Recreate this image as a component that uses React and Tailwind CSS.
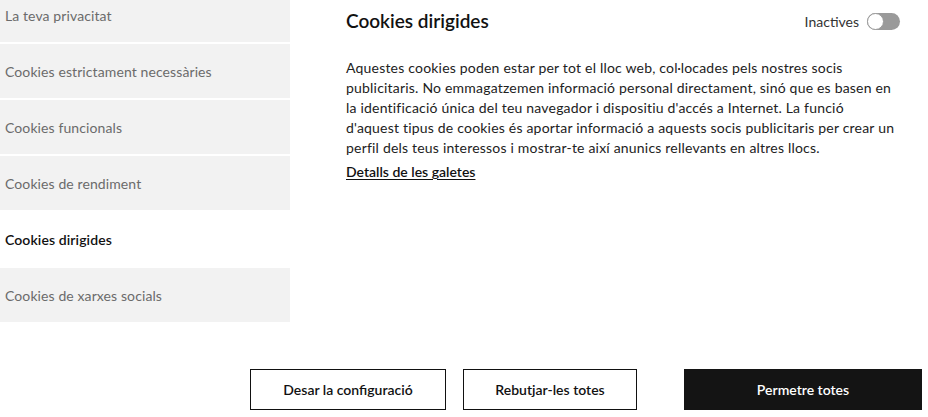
import React, { useState } from 'react';

const categories = [
  'La teva privacitat',
  'Cookies estrictament necessàries',
  'Cookies funcionals',
  'Cookies de rendiment',
  'Cookies dirigides',
  'Cookies de xarxes socials',
];

const lines = [
  'Aquestes cookies poden estar per tot el lloc web, col·locades pels nostres socis',
  'publicitaris. No emmagatzemen informació personal directament, sinó que es basen en',
  "la identificació única del teu navegador i dispositiu d'accés a Internet. La funció",
  "d'aquest tipus de cookies és aportar informació a aquests socis publicitaris per crear un",
  'perfil dels teus interessos i mostrar-te així anunics rellevants en altres llocs.',
];

const App = () => {
  const [active, setActive] = useState('Cookies dirigides');
  const [enabled, setEnabled] = useState(false);

  return (
    <div className="w-[928px] h-[417px] overflow-hidden bg-white text-[#1a1a1a] flex flex-col" style={{ fontFamily: 'Lato, "Noto Sans", sans-serif' }}>
      <div className="flex h-[350px]">
        {/* side menu */}
        <div className="w-[290px] shrink-0 -mt-[12px] flex flex-col">
          {categories.map((cat) => (
            <button
              key={cat}
              onClick={() => setActive(cat)}
              className={
                cat === active
                  ? 'h-[54px] mb-[2px] px-[5px] text-left text-[14px] tracking-[0.1px] font-semibold text-[#111] bg-white'
                  : 'h-[54px] mb-[2px] px-[5px] text-left text-[14px] tracking-[0.1px] text-[#6b6b6b] bg-[#f2f2f2]'
              }
            >
              {cat}
            </button>
          ))}
        </div>

        {/* detail */}
        <div className="ml-[56px] w-[555px] pt-[8px]">
          <div className="flex items-center justify-between h-[26px]">
            <h2 className="text-[19px] font-semibold text-[#111]">Cookies dirigides</h2>
            <div className="flex items-center gap-[8px]">
              <span className="text-[14px] text-[#333]">Inactives</span>
              <button
                onClick={() => setEnabled(!enabled)}
                className={
                  enabled
                    ? 'relative w-[33px] h-[17px] rounded-full bg-[#111] mr-[1px]'
                    : 'relative w-[33px] h-[17px] rounded-full bg-[#9a9a9a] mr-[1px]'
                }
              >
                <span
                  className={
                    enabled
                      ? 'absolute top-0 left-[16px] w-[17px] h-[17px] rounded-full bg-white border border-[#9a9a9a]'
                      : 'absolute top-0 left-0 w-[17px] h-[17px] rounded-full bg-white border border-[#9a9a9a]'
                  }
                />
              </button>
            </div>
          </div>

          <p className="mt-[24px] text-[14px] leading-[20px] tracking-[0.2px] text-[#222] whitespace-nowrap">
            {lines.map((l, i) => (
              <span key={i} className="block">{l}</span>
            ))}
          </p>
          <a href="#" className="inline-block mt-[3px] text-[14px] font-semibold text-[#111] underline underline-offset-2">
            Detalls de les galetes
          </a>
        </div>
      </div>

      {/* actions */}
      <div className="flex items-center pl-[250px] pt-[19px]">
        <button className="w-[196px] h-[41px] border border-[#111] text-[14px] font-semibold text-[#111] bg-white">
          Desar la configuració
        </button>
        <button className="ml-[17px] w-[174px] h-[41px] border border-[#111] text-[14px] font-semibold text-[#111] bg-white">
          Rebutjar-les totes
        </button>
        <button className="ml-[47px] w-[238px] h-[41px] bg-[#141414] text-[14px] font-semibold text-white">
          Permetre totes
        </button>
      </div>
    </div>
  );
};

export default App;
